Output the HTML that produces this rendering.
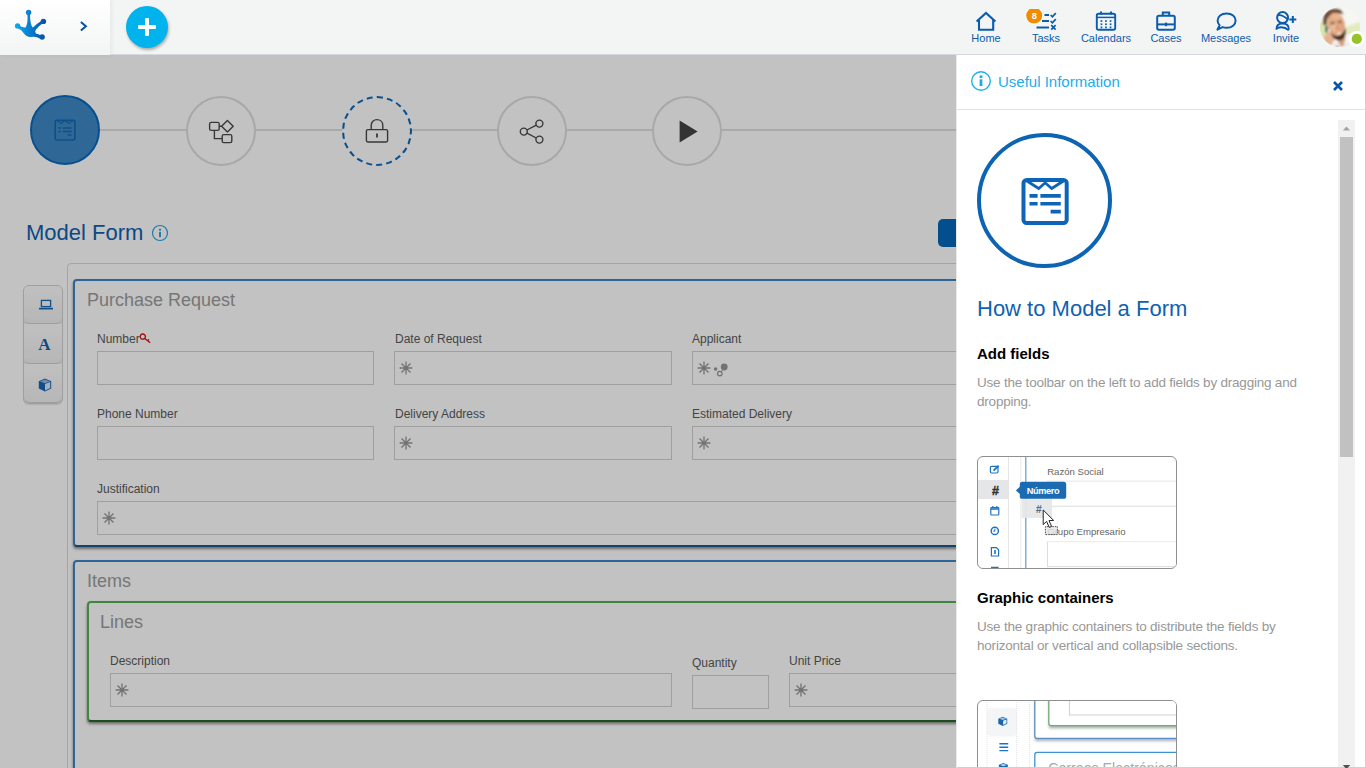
<!DOCTYPE html>
<html lang="en">
<head>
<meta charset="utf-8">
<title>Model Form</title>
<style>
*{box-sizing:border-box;margin:0;padding:0}
html,body{width:1366px;height:768px;overflow:hidden;background:#c2c2c2;font-family:"Liberation Sans",Arial,sans-serif;}
.abs{position:absolute}
#top{position:absolute;left:0;top:0;width:1366px;height:55px;background:#f3f5f5;z-index:5}
#top:after{content:"";position:absolute;left:110px;right:0;top:54px;height:1px;background:#d3d8de}
#logo{position:absolute;left:0;top:0;width:110px;height:55px;background:linear-gradient(#ffffff,#f3f4f4);box-shadow:2px 0 4px rgba(0,0,0,.05)}
#plus{position:absolute;left:126px;top:6px;width:42px;height:42px;border-radius:50%;background:#00b3ec;box-shadow:1px 2px 3px rgba(0,0,0,.3)}
#plus:before{content:"";position:absolute;left:12px;top:19px;width:18px;height:4px;background:#fff;border-radius:1px}
#plus:after{content:"";position:absolute;left:19px;top:12px;width:4px;height:18px;background:#fff;border-radius:1px}
.nav{position:absolute;top:0;width:70px;height:54px;text-align:center;color:#0b5cad;font-size:11px}
.nav span{position:absolute;left:0;right:0;top:32px;line-height:13px}
.nav svg{position:absolute;left:23px;top:9px}
#main{position:absolute;left:0;top:0;width:956px;height:768px;background:#fff;overflow:hidden;z-index:1}
#ov{position:absolute;left:0;top:0;width:956px;height:768px;background:rgba(0,0,0,.24);z-index:3}
.step{position:absolute;top:96px;width:70px;height:70px;border-radius:50%;border:2px solid #ddd;background:#fff}
.step svg{position:absolute;left:17px;top:17px}
#stline{position:absolute;left:90px;top:129px;width:900px;height:2px;background:#dedede}
#title{position:absolute;left:26px;top:219px;font-size:22px;line-height:28px;color:#0e61b0;white-space:nowrap}
#tb{position:absolute;left:23px;top:285px;width:40px;height:119px;border:1px solid #d2d2d2;border-radius:6px;background:#ededed;overflow:hidden;box-shadow:0 1px 1px rgba(0,0,0,.1)}
.tbb{position:relative;width:38px;height:39px;border-bottom:1px solid #d0d0d0;border-radius:0 0 6px 6px;background:linear-gradient(#fdfdfd,#f0f0f0)}
.tbb:first-child{height:38px}
.tbb:nth-child(2){height:40px}
#cont{position:absolute;left:67px;top:263px;width:1000px;height:600px;border:1px solid #d8d8d8;border-radius:4px}
.box{position:absolute;border:2px solid #3a85c8;border-bottom-color:#1f558d;border-radius:4px;background:#fff;box-shadow:0 2px 3px rgba(0,0,0,.45)}
.box.g{border-color:#52b152;border-bottom-color:#276727}
.bt{position:absolute;font-size:18px;line-height:22px;color:#9c9c9c;white-space:nowrap}
.lb{position:absolute;font-size:12px;line-height:14px;color:#5a5a5a;white-space:nowrap}
.in{position:absolute;height:34px;border:1px solid #d2d2d2;background:#fff}
.in svg{position:absolute;left:4px;top:9.4px}
#panel{position:absolute;left:956px;top:55px;width:410px;height:713px;background:#fff;border-left:1px solid #e9e9e9;border-right:1px solid #cfcfcf;z-index:4;overflow:hidden}
#ph{position:absolute;left:0;top:0;width:408px;height:55px;border-bottom:1px solid #e2e2e2}
#ph .t{position:absolute;left:41px;top:17px;font-size:15px;line-height:20px;color:#20aeee;white-space:nowrap}
#sc{position:absolute;left:0;top:65px;width:398px;height:648px;overflow:hidden}
#sbar{position:absolute;left:381px;top:65px;width:17px;height:647px;background:#f1f1f1}
#sbar i{position:absolute;left:2px;top:17px;width:13px;height:320px;background:#c1c1c1}
.h1{position:absolute;left:20px;font-size:22px;line-height:28px;color:#0f62b0;white-space:nowrap}
.h2{position:absolute;left:20px;font-size:15px;line-height:18px;font-weight:bold;color:#000;white-space:nowrap}
.pp{position:absolute;left:20px;width:340px;font-size:13.5px;letter-spacing:-0.21px;line-height:19px;color:#989898}
.img{position:absolute;left:20px;width:200px;height:113px;border:1px solid #8f8f8f;border-radius:6px;overflow:hidden;background:#fff}
</style>
</head>
<body>
<div id="top">
  <div id="logo">
    <svg width="110" height="54" viewBox="0 0 110 54">
      <defs><linearGradient id="lg" x1="15" y1="0" x2="45" y2="0" gradientUnits="userSpaceOnUse"><stop offset="0" stop-color="#14abe9"/><stop offset="0.55" stop-color="#0a78cc"/><stop offset="1" stop-color="#0450ab"/></linearGradient></defs>
      <g fill="url(#lg)">
        <path d="M27.4,14 Q28.2,23 25.6,27.4 Q22.6,27.8 19.6,25.8 L18.2,28.4 Q21.6,29.8 23.6,33 Q26.4,37.2 31.2,36.9 Q36,36.2 40.2,38.6 L41.8,36 Q38,33.4 35.8,33.4 Q34.6,31.4 35.8,29.8 Q38.4,26.2 43,23 L41.6,20.8 Q37,23.6 32.8,27.6 Q30.2,25 29.9,14 Z"/>
        <circle cx="28.6" cy="12.5" r="2.7"/><circle cx="43.4" cy="21.4" r="2.7"/><circle cx="17.6" cy="25.9" r="2.7"/><circle cx="42.1" cy="37" r="2.7"/>
      </g>
      <path d="M80.9,21.9 L85.9,26.2 L80.9,30.5" fill="none" stroke="#0a4ea6" stroke-width="2"/>
    </svg>
  </div>
  <div id="plus"></div>
  <div class="nav" style="left:951px"><svg width="24" height="24" viewBox="0 0 24 24" fill="none" stroke="#0b5cad" stroke-width="2.1"><path d="M2.6,12.6 L12,4 L21.4,12.6" stroke-linejoin="miter"/><path d="M5,10.6 V20.8 H19.2 V10.6"/></svg><span>Home</span></div>
  <div class="nav" style="left:1011px"><svg width="34" height="24" viewBox="-10 0 34 24" style="left:13px" fill="none" stroke="#0b5cad" stroke-width="1.8"><path d="M10.5,6 H15 M8,12 H15 M2.5,18.5 H15"/><path d="M16.6,6 L18.4,7.8 L21.8,4.2 M16.6,12 L18.4,13.8 L21.8,10.2 M17.2,16.2 L21.6,20.6 M21.6,16.2 L17.2,20.6" stroke-width="1.7"/><circle cx="0.2" cy="6.6" r="9" fill="#fff" stroke="none"/><circle cx="0.2" cy="6.6" r="8" fill="#f08c00" stroke="none"/><text x="0.2" y="9.9" font-family="Liberation Sans, Arial, sans-serif" font-size="9.3" font-weight="bold" fill="#fff" stroke="none" text-anchor="middle">8</text></svg><span>Tasks</span></div>
  <div class="nav" style="left:1071px"><svg width="24" height="24" viewBox="0 0 24 24" fill="none" stroke="#0b5cad" stroke-width="1.9"><rect x="2.8" y="4.8" width="18.4" height="16" rx="1.8"/><path d="M2.8,8.4 H21.2" stroke-width="1.5"/><path d="M7,2.4 V5.6 M17,2.4 V5.6" stroke-width="2"/><g fill="#0b5cad" stroke="none"><rect x="6.6" y="11.2" width="1.7" height="1.7"/><rect x="11.1" y="11.2" width="1.7" height="1.7"/><rect x="15.7" y="11.2" width="1.7" height="1.7"/><rect x="6.6" y="14.4" width="1.7" height="1.7"/><rect x="11.1" y="14.4" width="1.7" height="1.7"/><rect x="15.7" y="14.4" width="1.7" height="1.7"/><rect x="6.6" y="17.5" width="1.7" height="1.7"/><rect x="11.1" y="17.5" width="1.7" height="1.7"/><rect x="15.7" y="17.5" width="1.7" height="1.7"/></g></svg><span>Calendars</span></div>
  <div class="nav" style="left:1131px"><svg width="24" height="24" viewBox="0 0 24 24" fill="none" stroke="#0b5cad" stroke-width="2"><rect x="3.2" y="6.8" width="17.6" height="14" rx="1.8"/><path d="M8.8,6.8 V3.6 H15.2 V6.8"/><path d="M3.2,15.4 H20.8"/><path d="M12,13.6 V17.2" stroke-width="2.2"/></svg><span>Cases</span></div>
  <div class="nav" style="left:1191px"><svg width="24" height="24" viewBox="0 0 24 24" style="top:9.7px" fill="none" stroke="#0b5cad" stroke-width="2"><path d="M12.6,3.4 C18,3.4 21.6,6.6 21.6,10.6 C21.6,14.6 18,17.8 12.6,17.8 C11.2,17.8 9.8,17.6 8.6,17.1 L3.4,19.6 L5.6,15.2 C4.2,13.9 3.6,12.4 3.6,10.6 C3.6,6.6 7.2,3.4 12.6,3.4 Z" stroke-linejoin="round"/></svg><span>Messages</span></div>
  <div class="nav" style="left:1251px"><svg width="26" height="24" viewBox="0 0 26 24" style="left:22px" fill="none" stroke="#0b5cad" stroke-width="2"><circle cx="9.6" cy="8.6" r="5.5"/><path d="M4.6,6.4 C8,5.4 11,7 14.6,10.4" stroke-width="1.8"/><path d="M3.4,20.6 C3.2,16.4 5.4,14.6 9.6,14.6 C13.8,14.6 16,16.4 15.8,20.6"/><path d="M3.4,19.6 C7,17.8 12,18 15.8,21.4" stroke-width="1.8"/><path d="M19.8,7 V14 M16.3,10.5 H23.3" stroke-width="2"/></svg><span>Invite</span></div>
  <svg id="avatar" width="60" height="54" viewBox="0 0 60 54" style="position:absolute;left:1306px;top:0">
    <defs><clipPath id="ac"><circle cx="34" cy="27" r="20"/></clipPath><filter id="ab" x="-20%" y="-20%" width="140%" height="140%"><feGaussianBlur stdDeviation="0.85"/></filter></defs>
    <g clip-path="url(#ac)"><g filter="url(#ab)">
      <rect x="10" y="3" width="50" height="48" fill="#f6f6f3"/>
      <path d="M10,23 L22,21 L22,50 L10,50 Z" fill="#dbe5ae"/>
      <path d="M40,27 L56,21 L56,32 L40,35 Z" fill="#e1ebbd"/>
      <path d="M17.4,25 C14.6,14 22,8 30,8.4 C34.4,8.6 37,11 37.4,14.6 C33,12.4 26,13.4 22.4,17.4 C20.8,19.8 21,22.4 20.4,25.4 Z" fill="#6e4b33"/>
      <ellipse cx="30.4" cy="24.6" rx="8.6" ry="12" fill="#dfa581" transform="rotate(-12 30.4 24.6)"/>
      <ellipse cx="28.4" cy="27.4" rx="4.2" ry="4" fill="#ebb894"/>
      <ellipse cx="30" cy="16.6" rx="5" ry="2.6" fill="#e9b692" transform="rotate(-10 30 16.6)"/>
      <ellipse cx="26.6" cy="23.2" rx="2.1" ry="0.9" fill="#5a3d2e" transform="rotate(-8 26.6 23.2)"/>
      <ellipse cx="33.9" cy="21.9" rx="2.1" ry="0.9" fill="#5a3d2e" transform="rotate(-8 33.9 21.9)"/>
      <path d="M30.6,23.6 L32.8,29.2 L29.8,29.6 Z" fill="#c98c6c"/>
      <ellipse cx="23" cy="39" rx="5.2" ry="7" fill="#e6b092" transform="rotate(15 23 39)"/>
      <rect x="19.2" y="26" width="2.6" height="6.4" rx="1" fill="#3e5a55"/>
      <path d="M32,39 L39.4,36.6 L38.6,46 L33,47 Z" fill="#d79c7c"/>
      <path d="M24.6,31.4 C27,36 31,36.6 34,35.2 C37,33.6 38.6,31 39.4,27.4 C40.6,32 39.8,37 36.2,39.8 C32.6,41.6 28.6,40.2 26.6,36.8 Z" fill="#432d1e"/>
      <ellipse cx="33.2" cy="33.4" rx="2.3" ry="0.85" fill="#f7f1ec" transform="rotate(-22 33.2 33.4)"/>
      <path d="M27,44.6 L32.6,42.6 L35.6,48 L27,50 Z" fill="#efe6e1"/>
      <path d="M38.4,41.6 L45,44.4 L46,50 L37,50 Z" fill="#ecebea"/>
      <path d="M30,45.6 L33,47.6 L31,50 Z" fill="#4a5560"/>
    </g></g>
    <circle cx="50.8" cy="38.9" r="8" fill="#fff"/><circle cx="50.8" cy="38.9" r="5.1" fill="#98c22a"/>
  </svg>
</div>
<div id="main">
  <div id="stline"></div>
  <div class="step" style="left:30px;top:95px;background:#3e89c5;border-color:#0a69bb"><svg width="32" height="32" viewBox="0 0 32 32" fill="none" stroke="#1569b3" stroke-width="1.6"><rect x="6.2" y="6.4" width="19.6" height="19.6" rx="1.4"/><path d="M8.4,6.6 L12,9.6 L16,6.6 L20,9.6 L23.6,6.6" stroke-width="1.2"/><path d="M9.4,14 H11.8 M13.6,14 H22.6 M9.4,17.4 H11.8 M13.6,17.4 H22.6 M18.6,21 H22.6" stroke-width="1.5"/></svg></div>
  <div class="step" style="left:186px"><svg width="32" height="32" viewBox="0 0 32 32" fill="none" stroke="#4a4a4a" stroke-width="1.4"><rect x="4.6" y="7.4" width="9.6" height="8" rx="1.6"/><rect x="17.2" y="19.6" width="9.6" height="8" rx="1.6"/><path d="M22.4,5.4 L28.2,11.2 L22.4,17 L16.6,11.2 Z" stroke-linejoin="round"/><path d="M9.4,15.4 V23.6 H17.2 M14.2,11.3 H16.6"/></svg></div>
  <div class="step" style="left:342px;border:2px dashed #0a69bb"><svg width="32" height="32" viewBox="0 0 32 32" fill="none" stroke="#4a4a4a" stroke-width="1.4"><rect x="5.4" y="14.6" width="21.2" height="12.4" rx="1.4"/><path d="M10.2,14.6 V10.4 C10.2,6.8 12.8,4.6 16,4.6 C19.2,4.6 21.8,6.8 21.8,10.4 V14.6"/><path d="M16,18.6 V22.6" stroke-width="1.8"/></svg></div>
  <div class="step" style="left:497px"><svg width="32" height="32" viewBox="0 0 32 32" fill="none" stroke="#4a4a4a" stroke-width="1.4"><circle cx="7.8" cy="16.6" r="3.5"/><circle cx="23.4" cy="8.6" r="3.5"/><circle cx="23.4" cy="24.6" r="3.5"/><path d="M10.9,15 L20.3,10.2 M10.9,18.2 L20.3,23"/></svg></div>
  <div class="step" style="left:652px"><svg width="32" height="32" viewBox="0 0 32 32"><path d="M8.6,5.6 L26.6,16.6 L8.6,27.6 Z" fill="#444"/></svg></div>
  <div id="title">Model Form</div>
  <svg class="abs" style="left:150px;top:223px" width="20" height="20" viewBox="0 0 20 20"><circle cx="10" cy="10" r="7.5" fill="none" stroke="#25a4e0" stroke-width="1.2"/><rect x="9.1" y="8.8" width="1.8" height="5.4" fill="#1d9ada"/><rect x="9.1" y="5.8" width="1.8" height="1.9" fill="#1d9ada"/></svg>
  <div class="abs" style="left:938px;top:219px;width:40px;height:28px;background:#0568ba;border-radius:5px"></div>
  <div id="tb">
    <div class="tbb"><svg class="abs" style="left:13.5px;top:12px" width="16" height="14" viewBox="0 0 16 14" fill="none" stroke="#1a6ab5" stroke-width="1.3"><rect x="3.4" y="2.4" width="9.2" height="6.2"/><path d="M1,10.6 H15" stroke-width="1.6"/></svg></div>
    <div class="tbb"><div class="abs" style="left:0;width:41px;top:11px;text-align:center;font:bold 17px/20px 'Liberation Serif','Times New Roman',serif;color:#1460ac">A</div></div>
    <div class="tbb"><svg class="abs" style="left:13px;top:12.5px" width="16" height="16" viewBox="0 0 16 16"><path d="M8,1.6 L14.2,4.2 V11.4 L8,14.6 L1.8,11.4 V4.2 Z" fill="#1a66b2"/><path d="M8,7 L13.2,4.9 V10.9 L8,13.4 Z" fill="#fff" opacity=".85"/><path d="M3,4.4 L8,2.6 L13,4.4 L8,6.2 Z" fill="#fff" opacity=".55"/></svg></div>
  </div>
  <div id="cont"></div>
  <div class="box" style="left:73px;top:279px;width:1000px;height:268px"></div>
  <div class="bt" style="left:87px;top:289px">Purchase Request</div>
  <div class="lb" style="left:97px;top:332px">Number</div>
  <svg class="abs" style="left:139px;top:333px" width="12" height="12" viewBox="0 0 12 12" fill="none" stroke="#d8101a" stroke-width="1.3"><circle cx="3.8" cy="3.6" r="2.6"/><path d="M5.8,5.4 L11.2,9.8 M8.6,7.8 L10,6.4"/></svg>
  <div class="in" style="left:97px;top:351px;width:277px"></div>
  <div class="lb" style="left:395px;top:332px">Date of Request</div>
  <div class="in" style="left:394px;top:351px;width:278px"><svg width="14" height="14" viewBox="0 0 14 14" stroke="#969696" stroke-width="1.3" fill="none"><path d="M7,0.6 V13.4 M0.6,7 H13.4 M2.5,2.5 L11.5,11.5 M11.5,2.5 L2.5,11.5"/></svg></div>
  <div class="lb" style="left:692px;top:332px">Applicant</div>
  <div class="in" style="left:692px;top:351px;width:278px"><svg width="14" height="14" viewBox="0 0 14 14" stroke="#969696" stroke-width="1.3" fill="none"><path d="M7,0.6 V13.4 M0.6,7 H13.4 M2.5,2.5 L11.5,11.5 M11.5,2.5 L2.5,11.5"/></svg><svg style="left:19.5px;top:9.6px" width="16" height="16" viewBox="0 0 16 16"><circle cx="11.2" cy="5" r="3.4" fill="#969696"/><circle cx="6.8" cy="11.6" r="2.3" fill="none" stroke="#969696" stroke-width="1.2"/><circle cx="2.6" cy="7" r="1.8" fill="#969696"/><path d="M8,10 L10,7.6" stroke="#999" stroke-width="1"/></svg></div>
  <div class="lb" style="left:97px;top:407px">Phone Number</div>
  <div class="in" style="left:97px;top:426px;width:277px"></div>
  <div class="lb" style="left:395px;top:407px">Delivery Address</div>
  <div class="in" style="left:394px;top:426px;width:278px"><svg width="14" height="14" viewBox="0 0 14 14" stroke="#969696" stroke-width="1.3" fill="none"><path d="M7,0.6 V13.4 M0.6,7 H13.4 M2.5,2.5 L11.5,11.5 M11.5,2.5 L2.5,11.5"/></svg></div>
  <div class="lb" style="left:692px;top:407px">Estimated Delivery</div>
  <div class="in" style="left:692px;top:426px;width:278px"><svg width="14" height="14" viewBox="0 0 14 14" stroke="#969696" stroke-width="1.3" fill="none"><path d="M7,0.6 V13.4 M0.6,7 H13.4 M2.5,2.5 L11.5,11.5 M11.5,2.5 L2.5,11.5"/></svg></div>
  <div class="lb" style="left:97px;top:482px">Justification</div>
  <div class="in" style="left:97px;top:501px;width:900px"><svg width="14" height="14" viewBox="0 0 14 14" stroke="#969696" stroke-width="1.3" fill="none"><path d="M7,0.6 V13.4 M0.6,7 H13.4 M2.5,2.5 L11.5,11.5 M11.5,2.5 L2.5,11.5"/></svg></div>
  <div class="box" style="left:73px;top:560px;width:1000px;height:300px"></div>
  <div class="bt" style="left:87px;top:570px">Items</div>
  <div class="box g" style="left:87px;top:601px;width:1000px;height:121px"></div>
  <div class="bt" style="left:100px;top:611px">Lines</div>
  <div class="lb" style="left:110px;top:654px">Description</div>
  <div class="in" style="left:110px;top:673px;width:562px"><svg width="14" height="14" viewBox="0 0 14 14" stroke="#969696" stroke-width="1.3" fill="none"><path d="M7,0.6 V13.4 M0.6,7 H13.4 M2.5,2.5 L11.5,11.5 M11.5,2.5 L2.5,11.5"/></svg></div>
  <div class="lb" style="left:692px;top:656px">Quantity</div>
  <div class="in" style="left:692px;top:675px;width:77px"></div>
  <div class="lb" style="left:789px;top:654px">Unit Price</div>
  <div class="in" style="left:789px;top:673px;width:300px"><svg width="14" height="14" viewBox="0 0 14 14" stroke="#969696" stroke-width="1.3" fill="none"><path d="M7,0.6 V13.4 M0.6,7 H13.4 M2.5,2.5 L11.5,11.5 M11.5,2.5 L2.5,11.5"/></svg></div>
</div>
<div id="ov"></div>
<div id="panel">
  <div id="ph">
    <svg class="abs" style="left:13px;top:15.4px" width="22" height="22" viewBox="0 0 22 22"><circle cx="11" cy="11" r="9.3" fill="none" stroke="#1fb0ef" stroke-width="1.4"/><rect x="9.6" y="9.3" width="2.8" height="6.8" fill="#1fa8ea"/><rect x="9.6" y="5.4" width="2.8" height="2.7" fill="#1fa8ea"/></svg>
    <div class="t">Useful Information</div>
    <svg class="abs" style="left:375px;top:24.5px" width="12" height="12" viewBox="0 0 12 12"><path d="M2,2 L10,10 M10,2 L2,10" stroke="#0a56ab" stroke-width="2.6" fill="none"/></svg>
  </div>
  <div id="sc">
    <div class="abs" style="left:20px;top:13px;width:135px;height:135px;border:4.4px solid #0c64b3;border-radius:50%"></div>
    <svg class="abs" style="left:62.5px;top:56px" width="50" height="50" viewBox="0 0 50 50" fill="none" stroke="#0c65b6"><rect x="3.5" y="3.9" width="43.2" height="43" rx="3.2" stroke-width="4"/><path d="M7,5 L18.7,12.5 L25.2,6.8 L31.7,12.5 L43.4,5" stroke-width="2.8"/><path d="M9.5,19.9 H17.6 M20.4,19.9 H40.8 M9.5,27.75 H17.6 M20.4,27.75 H40.8 M30.6,35.6 H40.8" stroke-width="3.6"/></svg>
    <div class="h1" style="top:175px">How to Model a Form</div>
    <div class="h2" style="top:225px">Add fields</div>
    <div class="pp" style="top:253px">Use the toolbar on the left to add fields by dragging and dropping.</div>
    <div class="img" id="im1" style="top:336px">
    <svg width="200" height="113" viewBox="0 0 200 113" style="position:absolute;left:-1px;top:-1px">
      <rect x="0" y="24" width="31.5" height="19" fill="#e4e6e8"/>
      <path d="M31.6,0 V112" stroke="#e4e4e4" stroke-width="1"/>
      <path d="M43.8,0 V112" stroke="#e9e9e9" stroke-width="1"/>
      <path d="M48.8,0 V112" stroke="#6aa5dc" stroke-width="1.3"/>
      <g fill="none" stroke="#1c72c4" stroke-width="1.2">
        <rect x="13.4" y="10.4" width="7.6" height="6.6" rx="1.2"/><path d="M16.6,14.6 L21.6,9.6" stroke-width="1.8"/>
        <rect x="13.8" y="51.6" width="8" height="7.4" rx="0.8"/><path d="M13.8,53 H21.8" stroke-width="1.6"/><path d="M15.8,50 V52 M19.8,50 V52"/>
        <circle cx="17.8" cy="74.9" r="3.6" stroke-width="1.4"/><path d="M17.8,72.8 V75.2 H16.2" stroke-width="1"/>
        <path d="M14.4,91.6 H19.4 L21.6,93.8 V100 H14.4 Z"/><path d="M18,94 V98" stroke-width="1.6"/>
        <path d="M14,111.6 H21.6" stroke-width="1.6"/>
      </g>
      <text x="18.4" y="38.8" font-family="Liberation Sans, Arial, sans-serif" font-size="12.5" font-weight="bold" fill="#333" stroke="#333" stroke-width="0.4" text-anchor="middle">#</text>
      <text x="70.2" y="18.8" font-family="Liberation Sans, Arial, sans-serif" font-size="9.6" fill="#666">Razón Social</text>
      <rect x="70.5" y="25.2" width="140" height="25" fill="#fff" stroke="#dcdcdc" stroke-width="1"/>
      <path d="M70.5,25.2 H200" stroke="#fff" stroke-width="1" stroke-dasharray="1 1"/>
      <rect x="44.6" y="42.6" width="30.4" height="19.4" fill="#e6e7e8" opacity=".95"/>
      <text x="61.6" y="57" font-family="Liberation Sans, Arial, sans-serif" font-size="10.5" font-weight="bold" font-style="italic" fill="#5a6a7a" text-anchor="middle">#</text>
      <path d="M38.8,34.4 L43.2,30.6 V38.2 Z" fill="#1b6bb3"/>
      <rect x="42.8" y="25.8" width="46.4" height="17" rx="2.6" fill="#1b6bb3"/>
      <text x="66" y="37.6" font-family="Liberation Sans, Arial, sans-serif" font-size="9.2" font-weight="bold" fill="#fff" text-anchor="middle" letter-spacing="-0.35">Número</text>
      <text x="70.2" y="78.8" font-family="Liberation Sans, Arial, sans-serif" font-size="9.6" fill="#666">Grupo Empresario</text>
      <rect x="68.4" y="70.6" width="12" height="8" fill="#e4e4e4" fill-opacity=".8" stroke="#333" stroke-width="1" stroke-dasharray="0.8 0.8"/>
      <path d="M66.2,54 V68.6 L69.6,65.4 L72.2,71.4 L74.6,70.4 L72,64.6 L76.6,64.4 Z" fill="#fff" stroke="#222" stroke-width="1" stroke-linejoin="round"/>
      <rect x="70.5" y="85.6" width="140" height="25" fill="#fff" stroke="#dcdcdc" stroke-width="1"/>
      <path d="M70.5,85.6 H200" stroke="#fff" stroke-width="1" stroke-dasharray="1 1"/>
    </svg>
    </div>
    <div class="h2" style="top:469px">Graphic containers</div>
    <div class="pp" style="top:497px">Use the graphic containers to distribute the fields by horizontal or vertical and collapsible sections.</div>
    <div class="img" id="im2" style="top:580px">
    <svg width="200" height="113" viewBox="0 0 200 113" style="position:absolute;left:-1px;top:-1px">
      <defs><filter id="sh" x="-5%" y="-20%" width="110%" height="160%"><feGaussianBlur stdDeviation="1.6"/></filter></defs>
      <path d="M10,0 V112 M39.6,0 V112 M52.6,0 V112" stroke="#e3e3ea" stroke-width="1" stroke-dasharray="1 1"/>
      <rect x="11" y="9" width="28" height="26.4" rx="2" fill="#d8d8d8" filter="url(#sh)" opacity=".5"/>
      <rect x="10.6" y="8.4" width="28.6" height="26.6" rx="2.4" fill="#f4f5f6"/>
      <g transform="translate(20.8,16.4) scale(0.62)"><path d="M8,0.6 L15.2,3.6 V11.8 L8,15.4 L0.8,11.8 V3.6 Z" fill="#1a66b2"/><path d="M8.6,7.2 L14,4.9 V11 L8.6,13.8 Z" fill="#fff" opacity=".9"/><path d="M2.6,3.8 L8,1.8 L13.4,3.8 L8,5.8 Z" fill="#fff" opacity=".6"/></g>
      <path d="M22.4,43.8 H31.2 M22.4,47.2 H31.2 M22.4,50.6 H31.2" stroke="#1c72c4" stroke-width="1.4"/>
      <g transform="translate(21.4,62.6) scale(0.62)"><path d="M8,0.6 L15.2,3.6 V11.8 L8,15.4 L0.8,11.8 V3.6 Z" fill="#1a66b2"/><path d="M2.6,3.8 L8,1.8 L13.4,3.8 L8,5.8 Z" fill="#fff" opacity=".7"/></g>
      <rect x="58" y="-10" width="160" height="51" fill="#8f9bab" filter="url(#sh)" opacity=".8"/>
      <rect x="57.8" y="-10" width="160" height="48.4" rx="2.4" fill="#fff" stroke="#5b8ec4" stroke-width="1.3"/>
      <rect x="72" y="-10" width="150" height="38.2" fill="#8f9a8f" filter="url(#sh)" opacity=".8"/>
      <rect x="71.8" y="-10" width="150" height="35.6" rx="2.4" fill="#fff" stroke="#72aa72" stroke-width="1.3"/>
      <rect x="92.4" y="-10" width="130" height="25" fill="#fff" stroke="#d0d0d0" stroke-width="1"/>
      <rect x="57.8" y="52.4" width="160" height="80" rx="2.4" fill="#fff" stroke="#3f8fd6" stroke-width="1.3"/>
      <text x="71.2" y="72.5" font-family="Liberation Sans, Arial, sans-serif" font-size="14.2" fill="#a9a9a9">Correos Electrónicos</text>
    </svg>
    </div>
  </div>
  <div class="abs" style="left:0;top:712px;width:409px;height:1px;background:#cfcfcf"></div>
  <div id="sbar"><i></i>
    <svg class="abs" style="left:4px;top:5px" width="9" height="6" viewBox="0 0 9 6"><path d="M0.8,5.6 L4.5,1.4 L8.2,5.6 Z" fill="#a3a3a3"/></svg>
    <svg class="abs" style="left:4px;top:645px" width="9" height="6" viewBox="0 0 9 6"><path d="M0.8,0 L4.5,4.2 L8.2,0 Z" fill="#505050"/></svg>
  </div>
</div>
</body>
</html>
